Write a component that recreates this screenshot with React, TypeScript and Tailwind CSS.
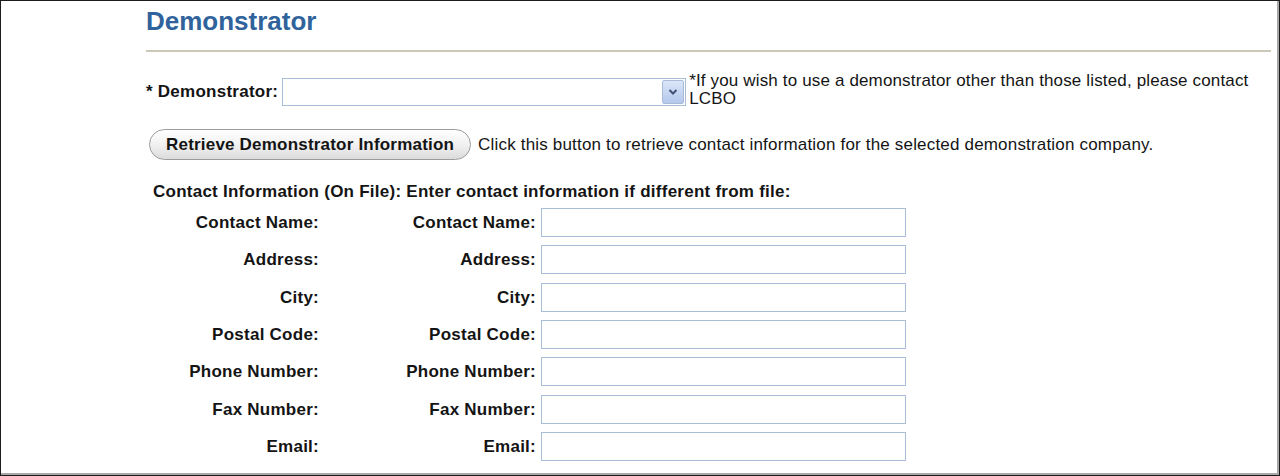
import React from "react";

const fields = [
  "Contact Name:",
  "Address:",
  "City:",
  "Postal Code:",
  "Phone Number:",
  "Fax Number:",
  "Email:",
];

function Chevron() {
  return (
    <svg width="10" height="8" viewBox="0 0 10 8">
      <path d="M1.5 2 L5 5.5 L8.5 2" fill="none" stroke="#3f5377" strokeWidth="2" />
    </svg>
  );
}

export default function App() {
  return (
    <div className="w-[1280px] h-[476px] bg-white border border-[#1c1c1c] font-['Liberation_Sans',Arial,sans-serif] text-[#141414]">
      <div className="h-full border-r-2 border-b-2 border-[#a8a8a8] pl-[145px] pr-[6px]">
        {/* heading */}
        <h1 className="pt-[5px] text-[26px] leading-[30px] font-bold text-[#30639b]">
          Demonstrator
        </h1>
        <div className="mt-[14px] h-[2px] bg-[#cdc9b8]" />

        {/* demonstrator select */}
        <div className="mt-[26px] flex items-start text-[17px]">
          <label className="mt-[4px] leading-[20px] font-bold tracking-[0.25px] whitespace-nowrap">
            * Demonstrator:
          </label>
          <div className="ml-[4px] w-[404px] h-[28px] border border-[#a9bdd6] bg-white flex items-center justify-end pr-[1px]">
            <div className="w-[22px] h-[24px] border border-[#aabbd9] bg-gradient-to-b from-[#dbe6f8] to-[#b4c8ec] rounded-[2px] flex items-center justify-center">
              <Chevron />
            </div>
          </div>
          <p className="ml-[3px] -mt-[6px] leading-[18px] tracking-[0.15px] w-[575px]">
            *If you wish to use a demonstrator other than those listed, please contact LCBO
          </p>
        </div>

        {/* retrieve button */}
        <div className="mt-[21px] flex items-center text-[17px]">
          <button className="ml-[3px] h-[31px] px-[16px] rounded-full border border-[#9c9c9c] bg-gradient-to-b from-white via-[#f1f1f1] to-[#dcdcdc] font-bold text-[#141414] tracking-[0.2px] whitespace-nowrap">
            Retrieve Demonstrator Information
          </button>
          <span className="ml-[7px] tracking-[0.18px] whitespace-nowrap">
            Click this button to retrieve contact information for the selected demonstration company.
          </span>
        </div>

        {/* contact info */}
        <div className="mt-[22px] ml-[7px] text-[17px] tracking-[0.25px]">
          <p className="leading-[20px] font-bold">
            Contact Information (On File): Enter contact information if different from file:
          </p>
          <div className="mt-[6px] grid grid-cols-[166px_212px_365px] gap-x-[5px] auto-rows-[37.33px]">
            {fields.map((f) => (
              <React.Fragment key={f}>
                <div className="text-right font-bold leading-[29px]">{f}</div>
                <div className="text-right font-bold leading-[29px]">{f}</div>
                <input
                  type="text"
                  className="h-[29px] border border-[#a9bdd6] bg-white outline-none"
                />
              </React.Fragment>
            ))}
          </div>
        </div>
      </div>
    </div>
  );
}
